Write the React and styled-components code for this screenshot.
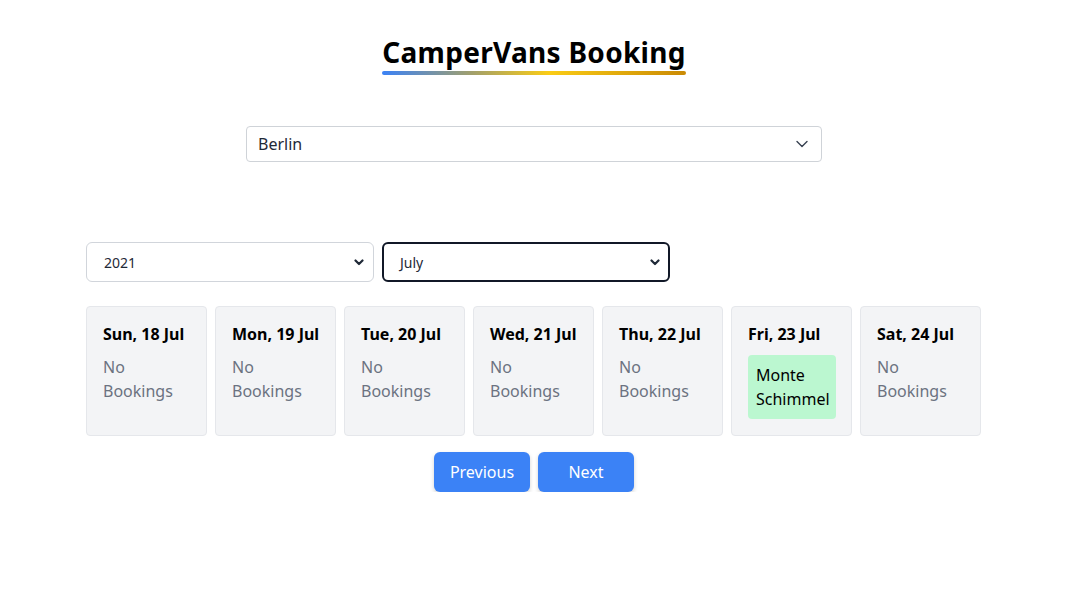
import styled, { createGlobalStyle } from "styled-components";

const GlobalStyle = createGlobalStyle`
  body {
    margin: 0;
    background: #ffffff;
    font-family: "Noto Sans", "Open Sans", sans-serif;
    color: #111827;
  }
  * { box-sizing: border-box; }
`;

const Page = styled.main`
  width: 1068px;
  padding-top: 34px;
  display: flex;
  flex-direction: column;
  align-items: center;
`;

const Title = styled.h1`
  margin: 0;
  font-size: 28px;
  line-height: 36px;
  font-weight: 700;
  letter-spacing: 0.3px;
  color: #000;

  &::after {
    content: "";
    display: block;
    height: 4px;
    margin-top: 1px;
    border-radius: 2px;
    background: linear-gradient(90deg, #3b82f6 0%, #a3a06a 30%, #facc15 55%, #ca8a04 100%);
  }
`;

const LocationSelect = styled.button`
  margin-top: 51px;
  width: 576px;
  height: 36px;
  display: flex;
  align-items: center;
  justify-content: space-between;
  padding: 0 13px 0 11px;
  background: #fff;
  border: 1px solid #cfd3d8;
  border-radius: 4px;
  font-family: inherit;
  font-size: 16px;
  color: #1f2937;
  cursor: pointer;
`;

const Calendar = styled.section`
  width: 896px;
  margin-top: 80px;
`;

const Filters = styled.div`
  display: flex;
  gap: 8px;
`;

const SelectBox = styled.div`
  width: 288px;
  height: 40px;
  display: flex;
  align-items: center;
  justify-content: space-between;
  padding: 0 ${(p) => (p.$focused ? "8px" : "9px")} 0 ${(p) => (p.$focused ? "16px" : "17px")};
  background: #fff;
  border: ${(p) => (p.$focused ? "2px solid #111827" : "1px solid #d1d5db")};
  border-radius: 6px;
  font-size: 14px;
  color: #1f2937;
`;

const Week = styled.div`
  margin-top: 24px;
  display: grid;
  grid-template-columns: repeat(7, 121px);
  gap: 8px;
`;

const DayCard = styled.div`
  height: 130px;
  padding: 15px 15px 15px 16px;
  background: #f3f4f6;
  border: 1px solid #e5e7eb;
  border-radius: 4px;
`;

const DayTitle = styled.div`
  font-size: 16px;
  line-height: 24px;
  font-weight: 700;
  color: #000;
  white-space: nowrap;
`;

const Empty = styled.div`
  margin-top: 9px;
  font-size: 16px;
  line-height: 24px;
  color: #6b7280;
`;

const Booking = styled.div`
  margin-top: 9px;
  padding: 8px;
  background: #bbf7d0;
  border-radius: 4px;
  font-size: 16px;
  line-height: 24px;
  color: #000;
`;

const Pager = styled.div`
  margin-top: 16px;
  display: flex;
  justify-content: center;
  gap: 8px;
`;

const PageButton = styled.button`
  width: 96px;
  height: 40px;
  border: none;
  border-radius: 6px;
  background: #3b82f6;
  color: #fff;
  font-family: inherit;
  font-size: 16px;
  box-shadow: 0 2px 4px rgba(0, 0, 0, 0.18);
  cursor: pointer;
`;

const ThinChevron = () => (
  <svg width="12" height="8" viewBox="0 0 12 8" fill="none">
    <path d="M1 1.5l5 5 5-5" stroke="#374151" strokeWidth="1.4" strokeLinecap="round" strokeLinejoin="round" />
  </svg>
);

const BoldChevron = () => (
  <svg width="10" height="7" viewBox="0 0 10 7" fill="none">
    <path d="M1.5 1.5L5 5l3.5-3.5" stroke="#1f2937" strokeWidth="2.2" strokeLinecap="round" strokeLinejoin="round" />
  </svg>
);

const days = [
  { label: "Sun, 18 Jul" },
  { label: "Mon, 19 Jul" },
  { label: "Tue, 20 Jul" },
  { label: "Wed, 21 Jul" },
  { label: "Thu, 22 Jul" },
  { label: "Fri, 23 Jul", booking: "Monte Schimmel" },
  { label: "Sat, 24 Jul" },
];

export default function App() {
  return (
    <>
      <GlobalStyle />
      <Page>
        <Title>CamperVans Booking</Title>
        <LocationSelect>
          <span>Berlin</span>
          <ThinChevron />
        </LocationSelect>

        <Calendar>
          <Filters>
            <SelectBox>
              <span>2021</span>
              <BoldChevron />
            </SelectBox>
            <SelectBox $focused>
              <span>July</span>
              <BoldChevron />
            </SelectBox>
          </Filters>

          <Week>
            {days.map((day) => (
              <DayCard key={day.label}>
                <DayTitle>{day.label}</DayTitle>
                {day.booking ? (
                  <Booking>{day.booking}</Booking>
                ) : (
                  <Empty>No Bookings</Empty>
                )}
              </DayCard>
            ))}
          </Week>

          <Pager>
            <PageButton>Previous</PageButton>
            <PageButton>Next</PageButton>
          </Pager>
        </Calendar>
      </Page>
    </>
  );
}
